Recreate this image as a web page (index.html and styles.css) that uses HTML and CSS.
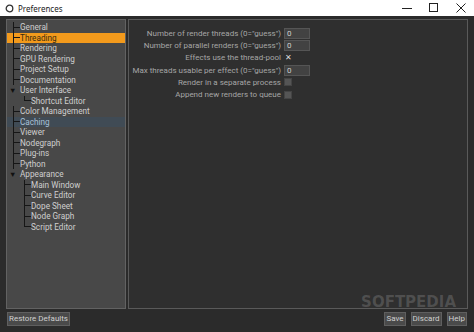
FILE: index.html
```html
<!DOCTYPE html>
<html lang="en">
<head>
    <meta charset="UTF-8">
    <title>Preferences</title>
    <link rel="stylesheet" href="styles.css">
</head>
<body>
    <div class="titlebar">
        <svg class="app-icon" width="9" height="9" viewBox="0 0 9 9">
            <circle cx="4.5" cy="4.5" r="3.3" fill="none" stroke="#333" stroke-width="1.3"/>
        </svg>
        <span class="title">Preferences</span>
        <div class="controls">
            <svg width="10" height="10" viewBox="0 0 10 10"><path d="M0 5.5h10" stroke="#222" stroke-width="1"/></svg>
            <svg width="10" height="10" viewBox="0 0 10 10"><rect x="0.5" y="0.5" width="8" height="8" fill="none" stroke="#222"/></svg>
            <svg width="10" height="10" viewBox="0 0 10 10"><path d="M0.5 0.5l9 9M9.5 0.5l-9 9" stroke="#222" stroke-width="1"/></svg>
        </div>
    </div>

    <div class="window">
        <div class="panes">
            <!-- arbre des sections -->
            <div class="tree">
                <div class="row"><span class="branch"></span>General</div>
                <div class="row selected"><span class="branch"></span>Threading</div>
                <div class="row"><span class="branch"></span>Rendering</div>
                <div class="row"><span class="branch"></span>GPU Rendering</div>
                <div class="row"><span class="branch"></span>Project Setup</div>
                <div class="row"><span class="branch"></span>Documentation</div>
                <div class="row"><span class="arrow">&#9660;</span>User Interface</div>
                <div class="row child"><span class="branch last"></span>Shortcut Editor</div>
                <div class="row"><span class="branch"></span>Color Management</div>
                <div class="row hover"><span class="branch"></span>Caching</div>
                <div class="row"><span class="branch"></span>Viewer</div>
                <div class="row"><span class="branch"></span>Nodegraph</div>
                <div class="row"><span class="branch"></span>Plug-ins</div>
                <div class="row"><span class="branch"></span>Python</div>
                <div class="row"><span class="arrow">&#9660;</span>Appearance</div>
                <div class="row child"><span class="branch"></span>Main Window</div>
                <div class="row child"><span class="branch"></span>Curve Editor</div>
                <div class="row child"><span class="branch"></span>Dope Sheet</div>
                <div class="row child"><span class="branch"></span>Node Graph</div>
                <div class="row child"><span class="branch last"></span>Script Editor</div>
            </div>

            <!-- options de threading -->
            <div class="settings">
                <div class="field"><label>Number of render threads (0="guess")</label><span class="box">0</span></div>
                <div class="field"><label>Number of parallel renders (0="guess")</label><span class="box">0</span></div>
                <div class="field"><label>Effects use the thread-pool</label><span class="tick on">&#10005;</span></div>
                <div class="field"><label>Max threads usable per effect (0="guess")</label><span class="box">0</span></div>
                <div class="field"><label>Render in a separate process</label><span class="tick"></span></div>
                <div class="field"><label>Append new renders to queue</label><span class="tick"></span></div>
            </div>
        </div>

        <div class="footer">
            <button>Restore Defaults</button>
            <div class="actions">
                <button>Save</button>
                <button>Discard</button>
                <button>Help</button>
            </div>
            <span class="watermark">SOFTPEDIA</span>
        </div>
    </div>
</body>
</html>
```

FILE: styles.css
```css
body {
    margin: 0;
    width: 474px;
    height: 332px;
    display: flex;
    flex-direction: column;
    background-color: #2b2b2b;
    font-family: Roboto, sans-serif;
    overflow: hidden;
}

.titlebar {
    height: 16px;
    flex: none;
    display: flex;
    align-items: center;
    background-color: #ffffff;
    padding-left: 5px;
}

.app-icon {
    margin-right: 4px;
}

.title {
    font-family: "Noto Sans", sans-serif;
    font-size: 8px;
    color: #222;
}

.controls {
    margin-left: auto;
    display: flex;
    gap: 17px;
    padding-right: 8px;
}

.window {
    flex: 1;
    display: flex;
    flex-direction: column;
    padding: 3px 6px 0 6px;
    position: relative;
}

.panes {
    display: flex;
    gap: 2px;
    height: 290px;
}

.tree {
    width: 118px;
    background-color: #484848;
    border: 1px solid #626262;
    padding-top: 2px;
    font-size: 8.2px;
    color: #cfcfcf;
}

.row {
    height: 10.5px;
    display: flex;
    align-items: center;
    white-space: nowrap;
}

.row.child {
    padding-left: 11px;
}

.row.selected {
    background-color: #f39a1c;
    color: #3b2a0c;
}

.row.hover {
    background-color: #404b55;
    color: #a9c0d6;
}

.branch {
    align-self: stretch;
    width: 6px;
    margin-left: 6px;
    border-left: 1px solid #161616;
    display: flex;
    align-items: center;
}

.branch::before {
    content: "";
    width: 6px;
    height: 1px;
    background-color: #161616;
}

.branch.last {
    align-self: auto;
    height: 5px;
    margin-bottom: 5px;
    align-items: flex-end;
}

.arrow {
    width: 11px;
    font-size: 7.5px;
    color: #111;
    padding-left: 2px;
}

.settings {
    flex: 1;
    background-color: #2f2f2f;
    border: 1px solid #5a5a5a;
    padding-top: 7px;
    font-size: 8px;
    color: #a6a6a6;
}

.field {
    display: flex;
    align-items: center;
    height: 12.3px;
    white-space: nowrap;
}

.field label {
    width: 152px;
    text-align: right;
    padding-right: 3px;
}

.box {
    width: 22px;
    height: 9px;
    border: 1px solid #555;
    background-color: #424242;
    color: #cfcfcf;
    font-size: 8px;
    line-height: 9px;
    padding-left: 2px;
}

.tick {
    width: 6px;
    height: 6px;
    background-color: #555;
    border: 1px solid #444;
    font-size: 8px;
    line-height: 6px;
    text-align: center;
    color: #ddd;
}

.tick.on {
    background-color: transparent;
    border-color: transparent;
}

.footer {
    display: flex;
    align-items: center;
    padding-top: 3px;
}

.actions {
    margin-left: auto;
    display: flex;
    gap: 4px;
    padding-right: 1px;
}

button {
    font-family: Roboto, sans-serif;
    font-size: 8px;
    color: #d0d0d0;
    background-color: #4a4a4a;
    border: 1px solid #5f5f5f;
    padding: 0 1px;
    height: 14px;
    line-height: 12px;
    margin-left: 1px;
}

.watermark {
    position: absolute;
    right: 18px;
    bottom: 21px;
    font-family: "DejaVu Sans", sans-serif;
    font-weight: bold;
    font-size: 15px;
    color: rgba(255, 255, 255, 0.16);
}
```
